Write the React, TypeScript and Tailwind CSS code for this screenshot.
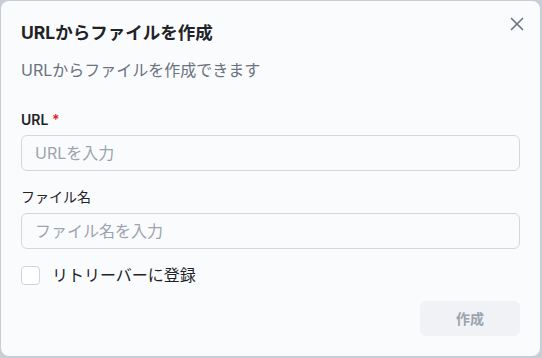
import React from "react";
import { X } from "lucide-react";

export default function App() {
  const font = { fontFamily: '"Inter", "Noto Sans CJK JP", sans-serif' };
  return (
    <div className="w-[542px] h-[358px] bg-[#c9ced6] overflow-hidden" style={font}>
      <div className="relative ml-[1px] mt-[1px] w-[539px] h-[355px] bg-[#fafbfd] rounded-lg px-5 pt-[18px] pb-5 flex flex-col">
        <button className="absolute right-[12px] top-[12px] text-[#6b7280]">
          <X size={22} strokeWidth={1.8} />
        </button>
        <h2 className="text-[17.5px] leading-[28px] font-bold text-[#1f2328]">URLからファイルを作成</h2>
        <p className="mt-[11px] text-[16px] leading-[24px] text-[#6b7280]">URLからファイルを作成できます</p>
        <label className="mt-[28px] text-[14px] leading-[20px] font-semibold text-[#1f2328]">
          URL <span className="text-[#dc2626]">*</span>
        </label>
        <input
          className="mt-[5px] h-[36px] w-full rounded-md border border-[#d3d8e0] bg-[#fafbfd] px-[13px] text-[16px] text-[#1f2328] placeholder:text-[#9ca3af] outline-none"
          placeholder="URLを入力"
        />
        <label className="mt-[16px] text-[14px] leading-[20px] text-[#1f2328]">ファイル名</label>
        <input
          className="mt-[6px] h-[36px] w-full rounded-md border border-[#d3d8e0] bg-[#fafbfd] px-[13px] text-[16px] text-[#1f2328] placeholder:text-[#9ca3af] outline-none"
          placeholder="ファイル名を入力"
        />
        <label className="mt-[14px] flex items-center gap-3 h-[24px]">
          <span className="w-[19px] h-[19px] rounded border border-[#cfd5de] bg-white" />
          <span className="text-[16px] text-[#1f2328]">リトリーバーに登録</span>
        </label>
        <div className="mt-[14px] flex justify-end">
          <button className="w-[100px] h-[35px] rounded-md bg-[#f0f2f5] text-[14px] font-semibold text-[#9ca3af]">作成</button>
        </div>
      </div>
    </div>
  );
}
